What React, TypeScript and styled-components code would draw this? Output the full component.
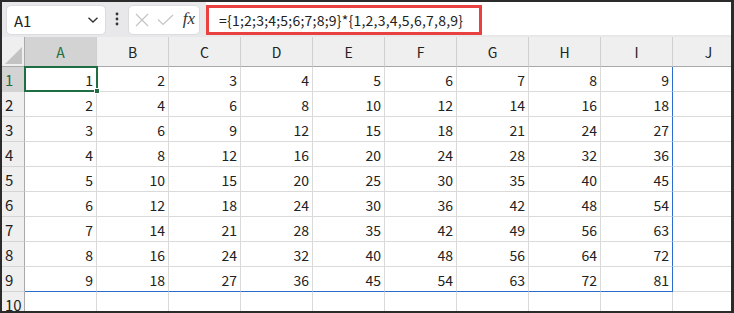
import styled, { createGlobalStyle } from 'styled-components';

const GlobalStyle = createGlobalStyle`
  html, body {
    margin: 0;
    padding: 0;
    background: #ffffff;
  }
  * {
    box-sizing: border-box;
  }
`;

const FONT = `"Noto Sans CJK JP", "Noto Sans", sans-serif`;

const Frame = styled.div`
  width: 734px;
  height: 313px;
  border: 2px solid #2b2b2b;
  border-right-width: 3px;
  background: #ffffff;
  overflow: hidden;
  display: flex;
  flex-direction: column;
  font-family: ${FONT};
  color: #222222;
`;

const Toolbar = styled.div`
  height: 35px;
  flex-shrink: 0;
  background: #e8e8eb;
  display: flex;
  align-items: flex-start;
  padding-left: 4px;
`;

const NameBox = styled.div`
  margin-top: 3px;
  width: 100px;
  height: 30px;
  background: #ffffff;
  border: 1px solid #dcdcdf;
  border-radius: 5px;
  display: flex;
  align-items: center;
  justify-content: space-between;
  padding: 0 6px 0 7px;
  font-size: 15px;
`;

const Dots = styled.div`
  width: 22px;
  height: 33px;
  display: flex;
  align-items: center;
  justify-content: center;
`;

const FuncBox = styled.div`
  margin-top: 3px;
  width: 72px;
  height: 30px;
  background: #ffffff;
  border: 1px solid #dcdcdf;
  border-radius: 5px;
  display: flex;
  align-items: center;
  justify-content: space-between;
  padding: 0 4px 0 6px;
`;

const Fx = styled.span`
  font-family: "Liberation Serif", "DejaVu Serif", serif;
  font-style: italic;
  font-size: 17px;
  color: #333333;
  margin-top: -2px;
`;

const FormulaBar = styled.div`
  flex: 1;
  height: 33px;
  margin-left: 6px;
  background: #ffffff;
  display: flex;
  align-items: flex-end;
`;

const Highlight = styled.div`
  width: 276px;
  height: 30px;
  border: 3px solid #e8413f;
  display: flex;
  align-items: center;
  padding-left: 10px;
  font-size: 14px;
  letter-spacing: 0.22px;
  color: #222222;
  white-space: nowrap;
`;

const Sheet = styled.div`
  display: grid;
  grid-template-columns: 23px repeat(10, 72px);
  grid-template-rows: 30px repeat(10, 25px);
  font-size: 14px;
`;

const Corner = styled.div`
  background: #efefef;
  border-right: 1px solid #a9a9a9;
  border-bottom: 1px solid #a9a9a9;
  display: flex;
  align-items: flex-end;
  justify-content: flex-end;
  padding: 0 2px 2px 0;
`;

const ColHead = styled.div<{ $active?: boolean }>`
  background: ${(p) => (p.$active ? '#d3d3d3' : '#efefef')};
  color: ${(p) => (p.$active ? '#1d6e41' : '#222222')};
  border-right: 1px solid #d0d0d0;
  border-bottom: 1px solid #a9a9a9;
  display: flex;
  align-items: center;
  justify-content: center;
  padding-top: 1px;
`;

const RowHead = styled.div<{ $active?: boolean }>`
  background: ${(p) => (p.$active ? '#d3d3d3' : '#efefef')};
  color: ${(p) => (p.$active ? '#1d6e41' : '#222222')};
  border-right: 1px solid #a9a9a9;
  border-bottom: 1px solid #d4d4d4;
  display: flex;
  align-items: center;
  padding-left: 3px;
  font-size: 15px;
`;

const Cell = styled.div<{ $spillRight?: boolean; $spillBottom?: boolean }>`
  position: relative;
  background: #ffffff;
  border-right: 1px solid ${(p) => (p.$spillRight ? '#2a6ccf' : '#dadada')};
  border-bottom: 1px solid ${(p) => (p.$spillBottom ? '#2a6ccf' : '#dadada')};
  display: flex;
  align-items: center;
  justify-content: flex-end;
  padding: 1px 3px 0 0;
`;

const Selection = styled.div`
  position: absolute;
  top: -1px;
  left: -1px;
  right: -2px;
  bottom: -1px;
  border: 2px solid #1f6e43;
  z-index: 2;
  pointer-events: none;
`;

const Handle = styled.div`
  position: absolute;
  right: -4px;
  bottom: -4px;
  width: 6px;
  height: 6px;
  background: #1f6e43;
  border: 1px solid #ffffff;
`;

const COLS = ['A', 'B', 'C', 'D', 'E', 'F', 'G', 'H', 'I', 'J'];
const ROWS = [1, 2, 3, 4, 5, 6, 7, 8, 9, 10];

export default function App() {
  return (
    <>
      <GlobalStyle />
      <Frame>
        <Toolbar>
          <NameBox>
            <span>A1</span>
            <svg width="12" height="8" viewBox="0 0 12 8">
              <path d="M1.5 1.8 L6 6 L10.5 1.8" fill="none" stroke="#333" strokeWidth="1.4" />
            </svg>
          </NameBox>
          <Dots>
            <svg width="4" height="14" viewBox="0 0 4 14">
              <circle cx="2" cy="2" r="1.4" fill="#333" />
              <circle cx="2" cy="7" r="1.4" fill="#333" />
              <circle cx="2" cy="12" r="1.4" fill="#333" />
            </svg>
          </Dots>
          <FuncBox>
            <svg width="14" height="14" viewBox="0 0 14 14">
              <path d="M1 1 L13 13 M13 1 L1 13" stroke="#c4c4c4" strokeWidth="1.2" />
            </svg>
            <svg width="17" height="12" viewBox="0 0 17 12">
              <path d="M1 5.5 L6 10.5 L16 1" fill="none" stroke="#c4c4c4" strokeWidth="1.2" />
            </svg>
            <Fx>fx</Fx>
          </FuncBox>
          <FormulaBar>
            <Highlight>={'{'}1;2;3;4;5;6;7;8;9{'}'}*{'{'}1,2,3,4,5,6,7,8,9{'}'}</Highlight>
          </FormulaBar>
        </Toolbar>
        <Sheet>
          <Corner>
            <svg width="17" height="17" viewBox="0 0 17 17">
              <path d="M17 0 L17 17 L0 17 Z" fill="#c3c3c3" />
            </svg>
          </Corner>
          {COLS.map((c, i) => (
            <ColHead key={c} $active={i === 0}>
              {c}
            </ColHead>
          ))}
          {ROWS.map((r) => [
            <RowHead key={`h${r}`} $active={r === 1}>
              {r}
            </RowHead>,
            ...COLS.map((c, i) => {
              const inRange = r <= 9 && i <= 8;
              return (
                <Cell
                  key={`${c}${r}`}
                  $spillRight={r <= 9 && i === 8}
                  $spillBottom={r === 9 && i <= 8}
                >
                  {inRange ? r * (i + 1) : ''}
                  {r === 1 && i === 0 && (
                    <Selection>
                      <Handle />
                    </Selection>
                  )}
                </Cell>
              );
            }),
          ])}
        </Sheet>
      </Frame>
    </>
  );
}
